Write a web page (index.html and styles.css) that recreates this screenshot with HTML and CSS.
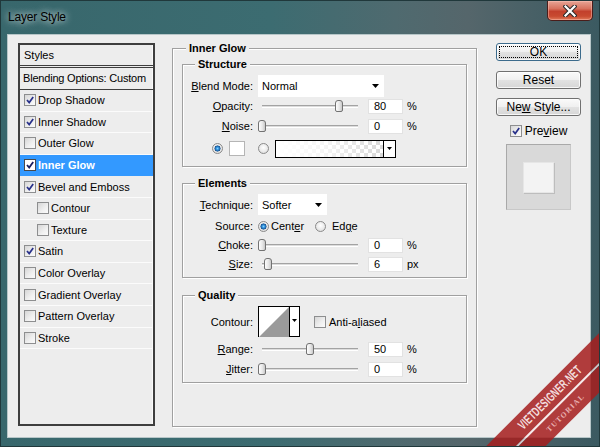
FILE: index.html
```html
<!DOCTYPE html>
<html>
<head>
<meta charset="utf-8">
<title>Layer Style</title>
<link rel="stylesheet" href="styles.css">
</head>
<body>
<div class="window">
  <div class="titlebar">
    <span class="title">Layer Style</span>
    <div class="close">
      <svg width="14" height="12" viewBox="0 0 14 12"><path d="M2.5 1.5 L11.5 10.5 M11.5 1.5 L2.5 10.5" stroke="#2a2a2a" stroke-width="4.2" stroke-linecap="square"/><path d="M2.5 1.5 L11.5 10.5 M11.5 1.5 L2.5 10.5" stroke="#fff" stroke-width="2.2" stroke-linecap="square"/></svg>
    </div>
  </div>
  <div class="client">
    <div class="styles-panel">
      <div class="sp-head">Styles</div>
      <div class="sp-blend">Blending Options: Custom</div>
      <div class="sp-item"><span class="cb"><svg viewBox="0 0 10 10" width="10" height="10"><path d="M2 5 L4.2 7.6 L8.2 2" fill="none" stroke="#27308a" stroke-width="1.7"/></svg></span>Drop Shadow</div>
      <div class="sp-item"><span class="cb"><svg viewBox="0 0 10 10" width="10" height="10"><path d="M2 5 L4.2 7.6 L8.2 2" fill="none" stroke="#27308a" stroke-width="1.7"/></svg></span>Inner Shadow</div>
      <div class="sp-item"><span class="cb"></span>Outer Glow</div>
      <div class="sp-item selected"><span class="cb"><svg viewBox="0 0 10 10" width="10" height="10"><path d="M2 5 L4.2 7.6 L8.2 2" fill="none" stroke="#1b2060" stroke-width="1.8"/></svg></span>Inner Glow</div>
      <div class="sp-item"><span class="cb"><svg viewBox="0 0 10 10" width="10" height="10"><path d="M2 5 L4.2 7.6 L8.2 2" fill="none" stroke="#27308a" stroke-width="1.7"/></svg></span>Bevel and Emboss</div>
      <div class="sp-item sub"><span class="cb"></span>Contour</div>
      <div class="sp-item sub"><span class="cb"></span>Texture</div>
      <div class="sp-item"><span class="cb"><svg viewBox="0 0 10 10" width="10" height="10"><path d="M2 5 L4.2 7.6 L8.2 2" fill="none" stroke="#27308a" stroke-width="1.7"/></svg></span>Satin</div>
      <div class="sp-item"><span class="cb"></span>Color Overlay</div>
      <div class="sp-item"><span class="cb"></span>Gradient Overlay</div>
      <div class="sp-item"><span class="cb"></span>Pattern Overlay</div>
      <div class="sp-item"><span class="cb"></span>Stroke</div>
    </div>

    <fieldset class="main-group">
      <legend>Inner Glow</legend>

      <fieldset class="group structure">
        <legend>Structure</legend>
        <div class="row r-blend">
          <span class="lbl"><u>B</u>lend Mode:</span>
          <div class="select sel-blend"><span>Normal</span><svg class="arrow" width="7" height="4" viewBox="0 0 7 4"><polygon points="0,0 7,0 3.5,4" fill="#000"/></svg></div>
        </div>
        <div class="row r-slider r-opacity">
          <span class="lbl"><u>O</u>pacity:</span>
          <div class="slider"><div class="track"></div><div class="thumb" style="left:80.8px"></div></div>
          <div class="num">80</div><span class="unit">%</span>
        </div>
        <div class="row r-slider r-noise">
          <span class="lbl"><u>N</u>oise:</span>
          <div class="slider"><div class="track"></div><div class="thumb" style="left:4px"></div></div>
          <div class="num">0</div><span class="unit">%</span>
        </div>
        <div class="row r-color">
          <span class="radio on"></span>
          <span class="swatch"></span>
          <span class="radio"></span>
          <div class="gradbox"><div class="grad"></div><div class="gradarrow"><svg width="5" height="3" viewBox="0 0 5 3"><polygon points="0,0 5,0 2.5,3" fill="#000"/></svg></div></div>
        </div>
      </fieldset>

      <fieldset class="group elements">
        <legend>Elements</legend>
        <div class="row r-tech">
          <span class="lbl"><u>T</u>echnique:</span>
          <div class="select sel-tech"><span>Softer</span><svg class="arrow" width="7" height="4" viewBox="0 0 7 4"><polygon points="0,0 7,0 3.5,4" fill="#000"/></svg></div>
        </div>
        <div class="row r-slider r-source">
          <span class="lbl">Source:</span>
          <span class="radio on"></span><span class="opt opt-center">Cent<u>e</u>r</span>
          <span class="radio"></span><span class="opt">Ed<u>g</u>e</span>
        </div>
        <div class="row r-slider r-choke">
          <span class="lbl"><u>C</u>hoke:</span>
          <div class="slider"><div class="track"></div><div class="thumb" style="left:4px"></div></div>
          <div class="num">0</div><span class="unit">%</span>
        </div>
        <div class="row r-slider r-size">
          <span class="lbl"><u>S</u>ize:</span>
          <div class="slider"><div class="track"></div><div class="thumb" style="left:10px"></div></div>
          <div class="num">6</div><span class="unit">px</span>
        </div>
      </fieldset>

      <fieldset class="group quality">
        <legend>Quality</legend>
        <div class="row r-contour">
          <span class="lbl">Contour:</span>
          <div class="contour">
            <svg class="curve" width="30" height="30" viewBox="0 0 30 30"><rect width="30" height="30" fill="#fff"/><polygon points="0,30 30,0 30,30" fill="#9a9a9a"/></svg>
            <div class="contour-arrow"><svg width="5" height="3" viewBox="0 0 5 3"><polygon points="0,0 5,0 2.5,3" fill="#000"/></svg></div>
          </div>
          <span class="cb plain"></span><span class="opt">Anti-a<u>l</u>iased</span>
        </div>
        <div class="row r-slider r-range">
          <span class="lbl"><u>R</u>ange:</span>
          <div class="slider"><div class="track"></div><div class="thumb" style="left:52px"></div></div>
          <div class="num">50</div><span class="unit">%</span>
        </div>
        <div class="row r-slider r-jitter">
          <span class="lbl"><u>J</u>itter:</span>
          <div class="slider"><div class="track"></div><div class="thumb" style="left:4px"></div></div>
          <div class="num">0</div><span class="unit">%</span>
        </div>
      </fieldset>
    </fieldset>

    <div class="buttons">
      <div class="btn default"><span class="focus">OK</span></div>
      <div class="btn"><span>Reset</span></div>
      <div class="btn"><span>Ne<u>w</u> Style...</span></div>
      <div class="preview-row"><span class="cb"><svg viewBox="0 0 10 10" width="10" height="10"><path d="M2 5 L4.2 7.6 L8.2 2" fill="none" stroke="#27308a" stroke-width="1.7"/></svg></span><span>Pre<u>v</u>iew</span></div>
      <div class="preview-box"><div class="preview-square"></div></div>
    </div>
  </div>

  <div class="watermark">
    <div class="band">
      <div class="strip s1"><span>VIETDESIGNER.NET</span></div>
      <div class="sep"></div>
      <div class="strip s2"><span>TUTORIAL</span></div>
    </div>
  </div>
</div>
</body>
</html>
```
FILE: styles.css
```css
* { box-sizing: border-box; }
html, body { margin: 0; padding: 0; }
body {
  width: 600px;
  height: 447px;
  overflow: hidden;
  font-family: "Liberation Sans", Arial, sans-serif;
  font-size: 11px;
  color: #000;
  background: #3a6468;
}
u { text-decoration: underline; text-underline-offset: 1px; }

.window {
  position: relative;
  width: 600px;
  height: 447px;
  overflow: hidden;
  display: flex;
  flex-direction: column;
  background: linear-gradient(90deg, #38676c 0%, #3c6c71 45%, #4f6a6f 66%, #55666b 78%, #3b5a61 100%);
  border: 1px solid #20383b;
}

/* title bar */
.titlebar {
  height: 33px;
  flex: none;
  display: flex;
  align-items: flex-start;
  padding-left: 7px;
}
.title {
  margin-top: 9px;
  font-size: 12px;
  letter-spacing: -0.2px;
  color: #000;
  text-shadow: 0 0 6px rgba(230, 240, 240, 0.9), 0 0 10px rgba(230, 240, 240, 0.6);
}
.close {
  margin-left: auto;
  margin-right: 6px;
  width: 46px;
  height: 20px;
  border: 1px solid #4a1d1a;
  border-top: none;
  border-radius: 0 0 5px 5px;
  background: linear-gradient(180deg, #e7a596 0%, #d7735f 40%, #c2402c 55%, #c84a30 80%, #e07a5a 100%);
  box-shadow: inset 0 0 0 1px rgba(255, 200, 190, 0.45);
  display: flex;
  align-items: center;
  justify-content: center;
}

/* client */
.client {
  flex: 1;
  margin: 0 8px 8px 6px;
  background: #ededed;
  border: 1px solid #b7c6c8;
  padding: 8px 0 0 10px;
  display: flex;
  align-items: flex-start;
}

/* styles list panel */
.styles-panel {
  width: 137px;
  height: 383px;
  flex: none;
  margin-right: 17px;
  border: 2px solid #3e3e3e;
  background: #ededed;
  box-shadow: inset -1px 0 0 #fafafa;
}
.sp-head {
  height: 23px;
  padding: 3px 0 0 4px;
  line-height: 14px;
  border-bottom: 3px double #3e3e3e;
}
.sp-blend {
  height: 22px;
  padding-left: 3px;
  line-height: 21px;
  border-bottom: 1px solid #3e3e3e;
  letter-spacing: -0.2px;
}
.sp-item {
  height: 21.6px;
  display: flex;
  align-items: center;
  padding-left: 4px;
  border-bottom: 1px solid #fbfbfb;
}
.sp-item.sub { padding-left: 17px; }
.sp-item.selected {
  background: #3399ff;
  color: #fff;
  font-weight: bold;
  border-bottom-color: #3399ff;
}
.cb {
  width: 12px;
  height: 12px;
  flex: none;
  margin-right: 2px;
  border: 1px solid #8d8e8f;
  background: linear-gradient(135deg, #d6d6d6 0%, #f0f0f0 60%, #fbfbfb 100%);
  display: flex;
  align-items: center;
  justify-content: center;
}
.sp-item.selected .cb {
  background: #fff;
  border-color: #4a4a4a;
}

/* fieldsets */
fieldset {
  margin: 0;
  min-width: 0;
  border: 1px solid #a0a0a0;
  box-shadow: inset 1px 1px 0 #fff, 1px 1px 0 #fff;
}
legend {
  padding: 0 3px;
  height: 12px;
  line-height: 12px;
  font-weight: bold;
  background: #ededed;
}
.main-group {
  width: 305px;
  height: 385px;
  flex: none;
  margin-top: -1px;
  margin-right: 19px;
  padding: 4px 9px 0 9px;
}
.main-group > legend { margin-left: 4px; }
.group {
  width: 285px;
  padding: 5px 0 0 0;
}
.group > legend { margin-left: 12px; }
.structure { padding-bottom: 8px; }
.elements { margin-top: 10px; padding-bottom: 4px; }
.quality { margin-top: 11px; padding-bottom: 4px; }

/* rows */
.row {
  display: flex;
  align-items: center;
}
.lbl {
  width: 70px;
  flex: none;
  text-align: right;
  margin-right: 5px;
  white-space: nowrap;
}
.r-blend { height: 22px; }
.r-slider { height: 18px; }
.r-noise { margin-top: 2px; }
.r-color { height: 19px; margin-top: 4px; padding-left: 29px; }
.r-tech { height: 21px; }
.r-source { margin-top: 2px; }
.r-choke, .r-size { margin-top: 1px; }
.r-contour { height: 31px; }
.r-range { margin-top: 3px; }
.r-jitter { margin-top: 2px; }

.select {
  height: 100%;
  background: #fff;
  display: flex;
  align-items: center;
  padding-left: 4px;
}
.sel-blend { width: 126px; }
.sel-tech { width: 69px; }
.select .arrow { margin-left: auto; margin-right: 5px; }

.slider {
  position: relative;
  width: 100px;
  height: 18px;
  flex: none;
}
.slider .track {
  position: absolute;
  left: 4px;
  right: 0;
  top: 8px;
  height: 3px;
  border-top: 1px solid #a3a3a3;
  border-bottom: 1px solid #fff;
  background: #dcdcdc;
}
.slider .thumb {
  position: absolute;
  top: 3px;
  width: 8px;
  height: 12px;
  margin-left: -4px;
  border: 1px solid #727272;
  border-radius: 3px 3px 2px 2px;
  background: linear-gradient(90deg, #fdfdfd 0%, #e8e8e8 55%, #c9c9c9 100%);
}
.num {
  width: 35px;
  height: 15px;
  margin-left: 10px;
  background: #fff;
  border: 1px solid #e2e2e2;
  padding-left: 5px;
  line-height: 13px;
}
.unit { margin-left: 4px; }

.radio {
  width: 11px;
  height: 11px;
  flex: none;
  border-radius: 50%;
  border: 1px solid #8a8a8a;
  background: radial-gradient(circle at 50% 40%, #ffffff 0%, #e8e8e8 60%, #cfcfcf 100%);
}
.radio.on {
  background:
    radial-gradient(circle at 50% 50%, #7fd0ff 0px, #2a8ad6 1.6px, #17508c 2.8px, rgba(23, 80, 140, 0) 3.3px),
    radial-gradient(circle at 50% 40%, #ffffff 0%, #e8e8e8 60%, #cfcfcf 100%);
}
.r-color .radio.on { margin-right: 6px; }
.swatch {
  width: 16px;
  height: 15px;
  flex: none;
  background: #fff;
  border: 1px solid #b5b5b5;
  margin-right: 13px;
}
.r-color .radio:not(.on) { margin-right: 6px; }
.gradbox {
  width: 121px;
  height: 18px;
  border: 1px solid #000;
  display: flex;
}
.grad {
  flex: 1;
  background:
    linear-gradient(90deg, #ffffff 0%, rgba(255, 255, 255, 0.75) 45%, rgba(255, 255, 255, 0) 100%),
    conic-gradient(#d8d8d8 25%, #ffffff 0 50%, #d8d8d8 0 75%, #ffffff 0) 0 0 / 8px 8px;
}
.gradarrow {
  width: 12px;
  border-left: 1px solid #000;
  background: #fff;
  display: flex;
  align-items: center;
  justify-content: center;
}

.r-source .radio { margin-right: 2px; }
.opt-center { width: 44px; }
.r-source .opt:last-child { margin-left: 4px; }

.contour {
  width: 42px;
  height: 31px;
  border: 1px solid #000;
  display: flex;
  margin-right: 14px;
}
.contour .curve { display: block; }
.contour-arrow {
  flex: 1;
  border-left: 1px solid #000;
  background: #fff;
  display: flex;
  align-items: center;
  justify-content: center;
  padding-bottom: 3px;
}
.cb.plain { margin-right: 3px; }

/* buttons */
.buttons {
  width: 85px;
  flex: none;
  display: flex;
  flex-direction: column;
  align-items: center;
}
.btn {
  width: 85px;
  height: 18px;
  border: 1px solid #707070;
  border-radius: 3px;
  background: linear-gradient(180deg, #fafafa 0%, #f0f0f0 48%, #e2e2e2 52%, #d6d6d6 100%);
  box-shadow: inset 0 0 0 1px rgba(255, 255, 255, 0.8);
  display: flex;
  align-items: center;
  justify-content: center;
  font-size: 12px;
  margin-top: 10px;
  white-space: nowrap;
}
.btn.default {
  margin-top: 0;
  border-color: #3c6b8c;
  padding: 2px;
}
.btn .focus {
  width: 100%;
  height: 100%;
  border: 1px dotted #000;
  display: flex;
  align-items: center;
  justify-content: center;
}
.btn:nth-child(3) { margin-top: 9px; }
.preview-row {
  height: 14px;
  margin-top: 8px;
  display: flex;
  align-items: center;
  font-size: 12px;
}
.preview-row .cb { margin-right: 3px; }
.preview-box {
  width: 65px;
  height: 66px;
  margin-top: 6px;
  background: #d9d9d9;
  border: 1px solid #a9a9a9;
  border-right-color: #c8c8c8;
  border-bottom-color: #c8c8c8;
  display: flex;
  align-items: center;
  justify-content: center;
}
.preview-square {
  width: 31px;
  height: 31px;
  background: #f3f3f3;
  border: 1px solid #e6e6e6;
  box-shadow: 1px 1px 0 #bdbdbd;
}

/* watermark */
.watermark {
  position: absolute;
  left: 0;
  top: 0;
  width: 600px;
  height: 447px;
  overflow: hidden;
  pointer-events: none;
}
.band {
  position: absolute;
  left: 430px;
  top: 379px;
  width: 260px;
  height: 42px;
  transform: rotate(-45deg);
}
.strip {
  display: flex;
  align-items: center;
  justify-content: center;
  padding-right: 10px;
  background: rgba(165, 30, 30, 0.86);
  white-space: nowrap;
}
.s1 { height: 21px; }
.s2 { height: 19px; }
.sep { height: 2px; background: rgba(250, 235, 235, 0.75); }
.s1 span {
  display: inline-block;
  font-family: "Liberation Sans", Arial, sans-serif;
  font-weight: bold;
  font-size: 13px;
  color: #f3dede;
  transform: scaleX(0.64);
  letter-spacing: 0.3px;
}
.s2 span {
  display: inline-block;
  font-family: "Liberation Serif", "Times New Roman", serif;
  font-weight: bold;
  font-size: 7.5px;
  letter-spacing: 1.3px;
  color: #eab4b4;
}
```
